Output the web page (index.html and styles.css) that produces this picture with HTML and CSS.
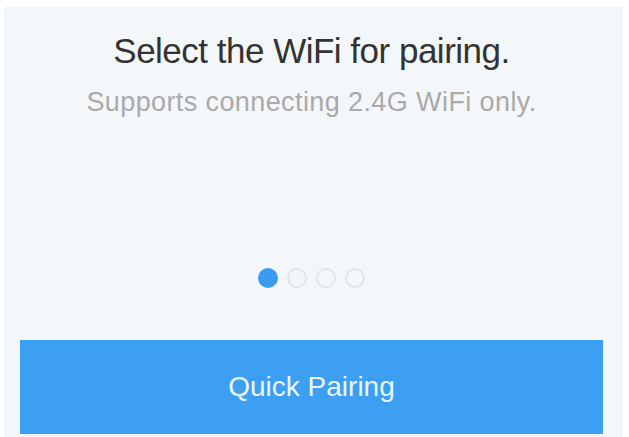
FILE: index.html
```html
<!DOCTYPE html>
<html lang="en">
<head>
  <meta charset="UTF-8" />
  <meta name="viewport" content="width=device-width, initial-scale=1" />
  <title>WiFi Pairing</title>
  <link rel="stylesheet" href="styles.css">
</head>
<body>
  <div class="screen">
    <div class="intro">
      <h1>Select the WiFi for pairing.</h1>
      <p>Supports connecting 2.4G WiFi only.</p>
    </div>

    <div class="pager">
      <span class="dot active"></span>
      <span class="dot"></span>
      <span class="dot"></span>
      <span class="dot"></span>
    </div>

    <button class="pair-btn">Quick Pairing</button>
  </div>
</body>
</html>
```

FILE: styles.css
```css
  body {
    margin: 0;
    background: #fff;
    font-family: "Liberation Sans", Arial, sans-serif;
  }
  .screen {
    margin: 7px 6px 0 4px;
    padding-right: 4px;
    height: 430px;
    background: #f4f7fa;
    display: flex;
    flex-direction: column;
    align-items: center;
  }
  .intro {
    text-align: center;
    padding-top: 26px;
  }
  h1 {
    margin: 0;
    font-size: 35px;
    line-height: 35px;
    letter-spacing: -0.5px;
    font-weight: normal;
    color: #333;
  }
  .intro p {
    margin: 21px 0 0;
    font-size: 27px;
    line-height: 27px;
    letter-spacing: 0.4px;
    color: #aaa;
  }
  .pager {
    margin-top: 152px;
    display: flex;
    gap: 9px;
  }
  .dot {
    width: 20px;
    height: 20px;
    border-radius: 50%;
    border: 2px solid #e2e4e6;
    box-sizing: border-box;
  }
  .dot.active {
    background: #3a9bf0;
    border-color: #3a9bf0;
  }
  .pair-btn {
    margin-top: 52px;
    width: 583px;
    height: 94px;
    border: none;
    background: #3d9ff1;
    color: #e9f6ff;
    font-family: inherit;
    font-size: 28px;
  }
```
